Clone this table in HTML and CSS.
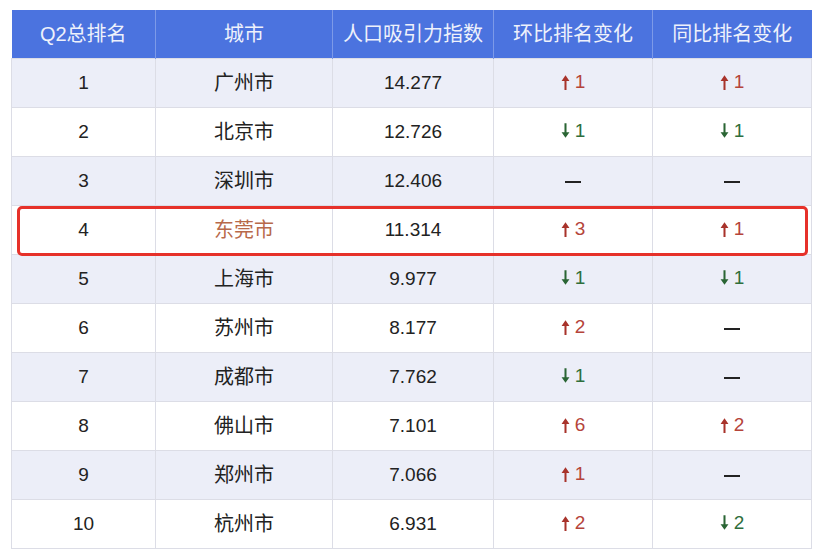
FILE: index.html
```html
<!DOCTYPE html>
<html lang="zh">
<head>
<meta charset="utf-8">
<link rel="stylesheet" href="styles.css">
</head>
<body>
<div class="wrap">
<table class="rank">
  <colgroup>
    <col class="c1"><col class="c2"><col class="c3"><col class="c4"><col class="c5">
  </colgroup>
  <thead>
    <tr><th>Q2总排名</th><th>城市</th><th>人口吸引力指数</th><th>环比排名变化</th><th>同比排名变化</th></tr>
  </thead>
  <tbody>
    <tr><td>1</td><td>广州市</td><td>14.277</td><td><span class="up"><svg viewBox="0 0 8 14"><path d="M4 1 L7.5 6 L4.9 6 L4.9 14 L3.1 14 L3.1 6 L0.5 6 Z"/></svg>1</span></td><td><span class="up"><svg viewBox="0 0 8 14"><path d="M4 1 L7.5 6 L4.9 6 L4.9 14 L3.1 14 L3.1 6 L0.5 6 Z"/></svg>1</span></td></tr>
    <tr><td>2</td><td>北京市</td><td>12.726</td><td><span class="down"><svg viewBox="0 0 8 14"><path d="M4 13 L7.5 8 L4.9 8 L4.9 0 L3.1 0 L3.1 8 L0.5 8 Z"/></svg>1</span></td><td><span class="down"><svg viewBox="0 0 8 14"><path d="M4 13 L7.5 8 L4.9 8 L4.9 0 L3.1 0 L3.1 8 L0.5 8 Z"/></svg>1</span></td></tr>
    <tr><td>3</td><td>深圳市</td><td>12.406</td><td><span class="dash"></span></td><td><span class="dash"></span></td></tr>
    <tr class="hl"><td>4</td><td class="city-hl">东莞市</td><td>11.314</td><td><span class="up"><svg viewBox="0 0 8 14"><path d="M4 1 L7.5 6 L4.9 6 L4.9 14 L3.1 14 L3.1 6 L0.5 6 Z"/></svg>3</span></td><td><span class="up"><svg viewBox="0 0 8 14"><path d="M4 1 L7.5 6 L4.9 6 L4.9 14 L3.1 14 L3.1 6 L0.5 6 Z"/></svg>1</span><div class="box"></div></td></tr>
    <tr><td>5</td><td>上海市</td><td>9.977</td><td><span class="down"><svg viewBox="0 0 8 14"><path d="M4 13 L7.5 8 L4.9 8 L4.9 0 L3.1 0 L3.1 8 L0.5 8 Z"/></svg>1</span></td><td><span class="down"><svg viewBox="0 0 8 14"><path d="M4 13 L7.5 8 L4.9 8 L4.9 0 L3.1 0 L3.1 8 L0.5 8 Z"/></svg>1</span></td></tr>
    <tr><td>6</td><td>苏州市</td><td>8.177</td><td><span class="up"><svg viewBox="0 0 8 14"><path d="M4 1 L7.5 6 L4.9 6 L4.9 14 L3.1 14 L3.1 6 L0.5 6 Z"/></svg>2</span></td><td><span class="dash"></span></td></tr>
    <tr><td>7</td><td>成都市</td><td>7.762</td><td><span class="down"><svg viewBox="0 0 8 14"><path d="M4 13 L7.5 8 L4.9 8 L4.9 0 L3.1 0 L3.1 8 L0.5 8 Z"/></svg>1</span></td><td><span class="dash"></span></td></tr>
    <tr><td>8</td><td>佛山市</td><td>7.101</td><td><span class="up"><svg viewBox="0 0 8 14"><path d="M4 1 L7.5 6 L4.9 6 L4.9 14 L3.1 14 L3.1 6 L0.5 6 Z"/></svg>6</span></td><td><span class="up"><svg viewBox="0 0 8 14"><path d="M4 1 L7.5 6 L4.9 6 L4.9 14 L3.1 14 L3.1 6 L0.5 6 Z"/></svg>2</span></td></tr>
    <tr><td>9</td><td>郑州市</td><td>7.066</td><td><span class="up"><svg viewBox="0 0 8 14"><path d="M4 1 L7.5 6 L4.9 6 L4.9 14 L3.1 14 L3.1 6 L0.5 6 Z"/></svg>1</span></td><td><span class="dash"></span></td></tr>
    <tr><td>10</td><td>杭州市</td><td>6.931</td><td><span class="up"><svg viewBox="0 0 8 14"><path d="M4 1 L7.5 6 L4.9 6 L4.9 14 L3.1 14 L3.1 6 L0.5 6 Z"/></svg>2</span></td><td><span class="down"><svg viewBox="0 0 8 14"><path d="M4 13 L7.5 8 L4.9 8 L4.9 0 L3.1 0 L3.1 8 L0.5 8 Z"/></svg>2</span></td></tr>
  </tbody>
</table>
</div>
</body>
</html>
```
FILE: styles.css
```css
html, body {
  margin: 0;
  padding: 0;
  background: #ffffff;
}
body {
  font-family: "Liberation Sans", "Noto Sans CJK SC", sans-serif;
  color: #222;
}
.wrap {
  padding: 10px 0 0 11px;
}
.rank {
  border-collapse: collapse;
  table-layout: fixed;
  width: 800px;
}
.c1 { width: 144px; }
.c2 { width: 177px; }
.c3 { width: 161px; }
.c4 { width: 159px; }
.c5 { width: 159px; }
.rank th {
  background: #4b73df;
  color: #eef1fb;
  font-weight: normal;
  font-size: 20px;
  line-height: 24px;
  height: 48px;
  padding: 0;
  border-left: 1px solid #7d9ae8;
  border-right: 1px solid #7d9ae8;
  text-align: center;
  vertical-align: middle;
}
.rank th:first-child { border-left: none; }
.rank th:last-child { border-right: none; }
.rank td {
  height: 48px;
  padding: 0;
  line-height: 24px;
  text-align: center;
  vertical-align: middle;
  font-size: 19px;
  color: #222;
  border: 1px solid #dcdde6;
}
.rank td:nth-child(2) { font-size: 20px; }
.rank tbody tr:nth-child(odd) td { background: #eceef8; }
.rank tbody tr:nth-child(even) td { background: #ffffff; }
.rank tr.hl td { background: #ffffff; }
.rank tr.hl td:last-child { position: relative; }
.city-hl { color: #b8694a !important; }
.up, .down {
  display: inline-flex;
  align-items: center;
  gap: 5px;
}
.up { color: #b5443a; }
.down { color: #2f6e3c; }
.up svg, .down svg {
  width: 9px;
  height: 16px;
  fill: currentColor;
}
.up svg { fill: #a8332b; }
.down svg { fill: #2a6534; }
.dash {
  display: inline-block;
  width: 16px;
  height: 2px;
  background: #222;
  vertical-align: middle;
}
.box {
  position: absolute;
  right: 3px;
  top: 0;
  width: 791px;
  height: 50px;
  box-sizing: border-box;
  border: 3px solid #e6312a;
  border-radius: 5px;
  pointer-events: none;
}
```
